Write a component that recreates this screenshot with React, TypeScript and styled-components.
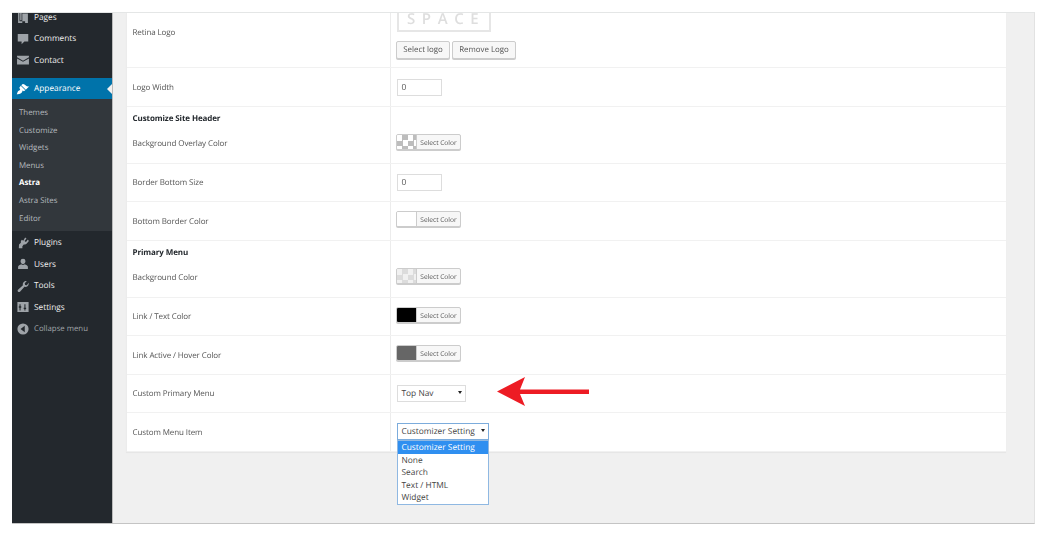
import React from "react";
import styled, { createGlobalStyle, css } from "styled-components";

const Global = createGlobalStyle`
  html, body { margin: 0; padding: 0; background: #fff; }
  body {
    font-family: "Open Sans", "Liberation Sans", sans-serif;
    width: 1047px;
    height: 536px;
    overflow: hidden;
    text-rendering: geometricPrecision;
  }
`;

const Frame = styled.div`
  position: relative;
  box-sizing: border-box;
  width: 1023px;
  height: 512px;
  margin: 12px 0 0 12px;
  display: flex;
  background: #f0f0f0;
  border-top: 1px solid #e4e6e6;
  border-right: 1px solid #e2e2e2;
  border-bottom: 1px solid #c4c4c4;
  filter: blur(0.45px);
`;

const Side = styled.nav`
  width: 100px;
  flex: none;
  background: #23282d;
  border-right: 1px solid #bbb;
  display: flex;
  flex-direction: column;
  overflow: hidden;
`;

const Item = styled.div<{ $active?: boolean; $muted?: boolean; $first?: boolean }>`
  height: 21.5px;
  box-sizing: border-box;
  padding: 0.8px 0 0 4px;
  flex: none;
  display: flex;
  align-items: center;
  gap: 4px;
  font-size: 8.3px;
  color: ${(p) => (p.$muted ? "#a0a5aa" : "#eee")};
  ${(p) => p.$muted && "font-size: 7.8px;"}
  ${(p) => p.$first && "margin-top: -7px;"}
  ${(p) =>
    p.$active &&
    css`
      position: relative;
      background: #0073aa;
      color: #fff;
      margin-top: 7px;
      &::after {
        content: "";
        position: absolute;
        right: 0;
        top: 6px;
        border: 5px solid transparent;
        border-right-color: #f1f1f1;
        border-left-width: 0;
      }
    `}
  svg { width: 14px; height: 14px; flex: none; fill: ${(p) => (p.$active ? "#fff" : "#9ea3a8")}; }
`;

const Sub = styled.div`
  background: #32373c;
  height: 132px;
  margin-bottom: 0.5px;
  padding-top: 5.3px;
  box-sizing: border-box;
  flex: none;
`;

const SubItem = styled.div<{ $on?: boolean }>`
  height: 17.6px;
  display: flex;
  align-items: center;
  padding-left: 7px;
  font-size: 7.9px;
  color: ${(p) => (p.$on ? "#fff" : "#b4b9be")};
  font-weight: ${(p) => (p.$on ? 700 : 400)};
`;

const Main = styled.main`
  flex: 1;
  padding: 0 28px 0 13px;
  min-width: 0;
`;

const Card = styled.div`
  background: #fff;
  border-left: 1px solid #ececec;
  display: flex;
  flex-direction: column;
  box-shadow: 0 1px 1px rgba(0, 0, 0, 0.04);
`;

const Row = styled.div<{ $h: number }>`
  height: ${(p) => p.$h}px;
  box-sizing: border-box;
  display: grid;
  grid-template-columns: 263px 1fr;
  border-bottom: 1px solid #f1f1f1;
`;

const Label = styled.div<{ $raise?: number }>`
  padding: 0 0 ${(p) => p.$raise ?? 0}px 5.5px;
  display: flex;
  align-items: center;
  font-size: 8px;
  letter-spacing: -0.1px;
  color: #555;
`;

const Stack = styled.div`
  padding-left: 5.5px;
  display: flex;
  flex-direction: column;
  font-size: 8px;
  letter-spacing: -0.1px;
  color: #555;
  padding-top: 5.8px;
  b { color: #23282d; font-weight: 700; line-height: 12px; }
  span { margin-top: 13.3px; line-height: 12px; }
`;

const Control = styled.div<{ $top?: number; $lift?: number }>`
  border-left: 1px solid #ececec;
  padding-left: 5px;
  padding-bottom: ${(p) => p.$lift ?? 0}px;
  display: flex;
  align-items: center;
  ${(p) => p.$top !== undefined && `align-items: flex-start; padding-top: ${p.$top}px;`}
`;

const LogoCell = styled.div`
  border-left: 1px solid #ececec;
  padding-left: 5px;
  display: flex;
  flex-direction: column;
`;

const LogoBox = styled.div`
  box-sizing: border-box;
  margin-left: 1px;
  width: 94px;
  height: 19px;
  padding-left: 8px;
  border: 2px solid #e6e6e6;
  border-top: 0;
  color: #dedede;
  font-size: 15px;
  font-weight: 600;
  letter-spacing: 6.6px;
  line-height: 13px;
  white-space: nowrap;
`;

const ButtonRow = styled.div`
  display: flex;
  gap: 2px;
  margin-top: 8.5px;
`;

const Btn = styled.button<{ $w: number }>`
  box-sizing: border-box;
  width: ${(p) => p.$w}px;
  height: 18px;
  padding: 0;
  font: 7.9px "Open Sans", sans-serif;
  text-rendering: geometricPrecision;
  color: #555;
  background: #f7f7f7;
  border: 1px solid #ccc;
  border-radius: 2px;
  box-shadow: 0 1px 0 #ccc;
`;

const Num = styled.div`
  box-sizing: border-box;
  width: 45px;
  height: 17px;
  margin-left: 0.5px;
  padding-left: 4px;
  display: flex;
  align-items: center;
  font-size: 8.4px;
  color: #555;
  background: #fff;
  border: 1px solid #ddd;
`;

const ColorBtn = styled.div`
  box-sizing: border-box;
  width: 65px;
  height: 16px;
  display: flex;
  border: 1px solid #ccc;
  border-radius: 2px;
  box-shadow: 0 1px 0 #ccc;
  background: #f7f7f7;
  overflow: hidden;
`;

const Swatch = styled.div<{ $kind: string }>`
  width: 19px;
  flex: none;
  border-right: 1px solid #ccc;
  ${(p) =>
    p.$kind === "check"
      ? css`
          background: repeating-conic-gradient(#bdbdbd 0 25%, #fff 0 50%) 0 0 / 11px 11px;
        `
      : p.$kind === "lightcheck"
      ? css`
          background: repeating-conic-gradient(#dcdcdc 0 25%, #f1f1f1 0 50%) 0 0 / 11px 11px;
        `
      : css`
          background: ${p.$kind};
        `}
`;

const ColorText = styled.div`
  flex: 1;
  text-align: center;
  font-size: 6.6px;
  line-height: 15px;
  color: #555;
`;

const Select = styled.div<{ $w: number; $focus?: boolean }>`
  position: relative;
  box-sizing: border-box;
  width: ${(p) => p.$w}px;
  height: 17px;
  margin-left: 0.5px;
  padding: 0.8px 0 0 4px;
  display: flex;
  align-items: center;
  font-size: 8.35px;
  color: #444;
  background: #fff;
  border: 1px solid ${(p) => (p.$focus ? "#7cacdc" : "#ddd")};
  &::after {
    content: "";
    position: absolute;
    right: 3px;
    top: 5px;
    border: 2.3px solid transparent;
    border-top: 3.6px solid #222;
    border-bottom-width: 0;
  }
`;

const Popup = styled.div`
  position: absolute;
  top: 16.5px;
  left: -1px;
  box-sizing: border-box;
  width: 92px;
  height: 65px;
  background: #fff;
  border: 1px solid #8fb8e2;
  z-index: 3;
`;

const Opt = styled.div<{ $sel?: boolean }>`
  height: 12.6px;
  line-height: 14.2px;
  padding-left: 4px;
  font-size: 8.35px;
  white-space: nowrap;
  color: ${(p) => (p.$sel ? "#fff" : "#444")};
  background: ${(p) => (p.$sel ? "#2f8ff0" : "transparent")};
`;

const Arrow = styled.svg`
  position: absolute;
  left: 485px;
  top: 364px;
  width: 92px;
  height: 30px;
`;

const icons: Record<string, string> = {
  pages: "M6 1.500h9v2H8v11H6zM9 5h8v13.500H9zM3 4h2v12h8v2.500H3z",
  comments: "M2.500 3h15v10.500h-5.500L8 17.500v-4H2.500z",
  contact: "M1.500 4h17v2.200L10 11 1.500 6.200zM1.500 7.800 10 12.600l8.500-4.800V16.500h-17z",
  brush: "M19 6c-2 1-3.500.3-5-1-1.500-1.200-3-2.600-4.800-1.900L7.500 4.500l6.500 6.500zM6.800 5.200 13.300 11.700l-2 1.600-1.800-1-.8 2c-.6 1.600-3.900 3.800-7.700 3.200 1-1.200 1-3.400 2.200-4.600.7-.7 2.400-1.200 2.800-2.300L4.700 8.200z",
  plugin: "M13 2l2 1.500-2.800 3.600 2 1.500L17 5l1.400 2-3 3.800c-1 1.400-2.800 1.900-4.300 1.200l-2 2.500v3H4l.3-5.400L7 9.600C6.600 8.400 7 7 7.800 6l.6-.8 2 1.500z",
  users: "M10 2.500a3.500 3.500 0 0 1 3.500 3.700c0 2-1.500 4-3.500 4s-3.500-2-3.500-4A3.500 3.500 0 0 1 10 2.500zM3 17v-3c0-1.500 2.700-3 4.400-3.600.8.700 1.700 1.100 2.600 1.100s1.800-.4 2.600-1.100C14.300 11 17 12.500 17 14v3z",
  tools: "M18 5.500c.4 2-.2 3.700-1.600 4.800-1.200 1-2.900 1.200-4.300.8L6 18c-.8.900-2.200 1-3 .2-.9-.8-.9-2.200-.1-3l7-6.100c-.5-1.500-.2-3.200.9-4.500C12 3.300 13.900 2.600 15.500 3L12.500 6l.5 2.500 2.500.6z",
  settings: "M2 3h16v14H2zM5 6v3H4v2h1v4h1.500v-4h1V9h-1V6zM12 6v5h-1v2h1v2h1.500v-2h1v-2h-1V6z",
  collapse: "M10 2a8 8 0 1 1 0 16 8 8 0 0 1 0-16zM12.500 5.500 6.500 10l6 4.500z",
};

const Icon = ({ n }: { n: string }) => (
  <svg viewBox="0 0 20 20" aria-hidden="true">
    <path fillRule="evenodd" d={icons[n]} />
  </svg>
);

const Color = ({ kind }: { kind: string }) => (
  <ColorBtn>
    <Swatch $kind={kind} />
    <ColorText>Select Color</ColorText>
  </ColorBtn>
);

const Simple = ({ h, label, lift, children }: { h: number; label: string; lift?: number; children: React.ReactNode }) => (
  <Row $h={h}>
    <Label>{label}</Label>
    <Control $lift={lift}>{children}</Control>
  </Row>
);

const Grouped = ({ title, label, children }: { title: string; label: string; children: React.ReactNode }) => (
  <Row $h={57}>
    <Stack>
      <b>{title}</b>
      <span>{label}</span>
    </Stack>
    <Control $top={27}>{children}</Control>
  </Row>
);

export default function App() {
  return (
    <>
      <Global />
      <Frame>
        <Side>
          <Item $first><Icon n="pages" />Pages</Item>
          <Item><Icon n="comments" />Comments</Item>
          <Item><Icon n="contact" />Contact</Item>
          <Item $active><Icon n="brush" />Appearance</Item>
          <Sub>
            <SubItem>Themes</SubItem>
            <SubItem>Customize</SubItem>
            <SubItem>Widgets</SubItem>
            <SubItem>Menus</SubItem>
            <SubItem $on>Astra</SubItem>
            <SubItem>Astra Sites</SubItem>
            <SubItem>Editor</SubItem>
          </Sub>
          <Item><Icon n="plugin" />Plugins</Item>
          <Item><Icon n="users" />Users</Item>
          <Item><Icon n="tools" />Tools</Item>
          <Item><Icon n="settings" />Settings</Item>
          <Item $muted><Icon n="collapse" />Collapse menu</Item>
        </Side>
        <Main>
          <Card>
            <Row $h={55}>
              <Label $raise={16}>Retina Logo</Label>
              <LogoCell>
                <LogoBox>SPACE</LogoBox>
                <ButtonRow>
                  <Btn $w={54}>Select logo</Btn>
                  <Btn $w={64}>Remove Logo</Btn>
                </ButtonRow>
              </LogoCell>
            </Row>
            <Simple h={39} label="Logo Width"><Num>0</Num></Simple>
            <Grouped title="Customize Site Header" label="Background Overlay Color"><Color kind="check" /></Grouped>
            <Simple h={38} label="Border Bottom Size"><Num>0</Num></Simple>
            <Simple h={39} lift={5} label="Bottom Border Color"><Color kind="#fff" /></Simple>
            <Grouped title="Primary Menu" label="Background Color"><Color kind="lightcheck" /></Grouped>
            <Simple h={38} lift={4} label="Link / Text Color"><Color kind="#000" /></Simple>
            <Simple h={39} lift={4} label="Link Active / Hover Color"><Color kind="#666" /></Simple>
            <Simple h={38} label="Custom Primary Menu"><Select $w={69}>Top Nav</Select></Simple>
            <Simple h={39} lift={2} label="Custom Menu Item">
              <Select $w={92} $focus>
                Customizer Setting
                <Popup>
                  <Opt $sel>Customizer Setting</Opt>
                  <Opt>None</Opt>
                  <Opt>Search</Opt>
                  <Opt>Text / HTML</Opt>
                  <Opt>Widget</Opt>
                </Popup>
              </Select>
            </Simple>
          </Card>
        </Main>
        <Arrow viewBox="0 0 92 30" aria-hidden="true">
          <path d="M0 14.500 28 0 23 12.500H92V17H23L28 29z" fill="#ed1c24" />
        </Arrow>
      </Frame>
    </>
  );
}
